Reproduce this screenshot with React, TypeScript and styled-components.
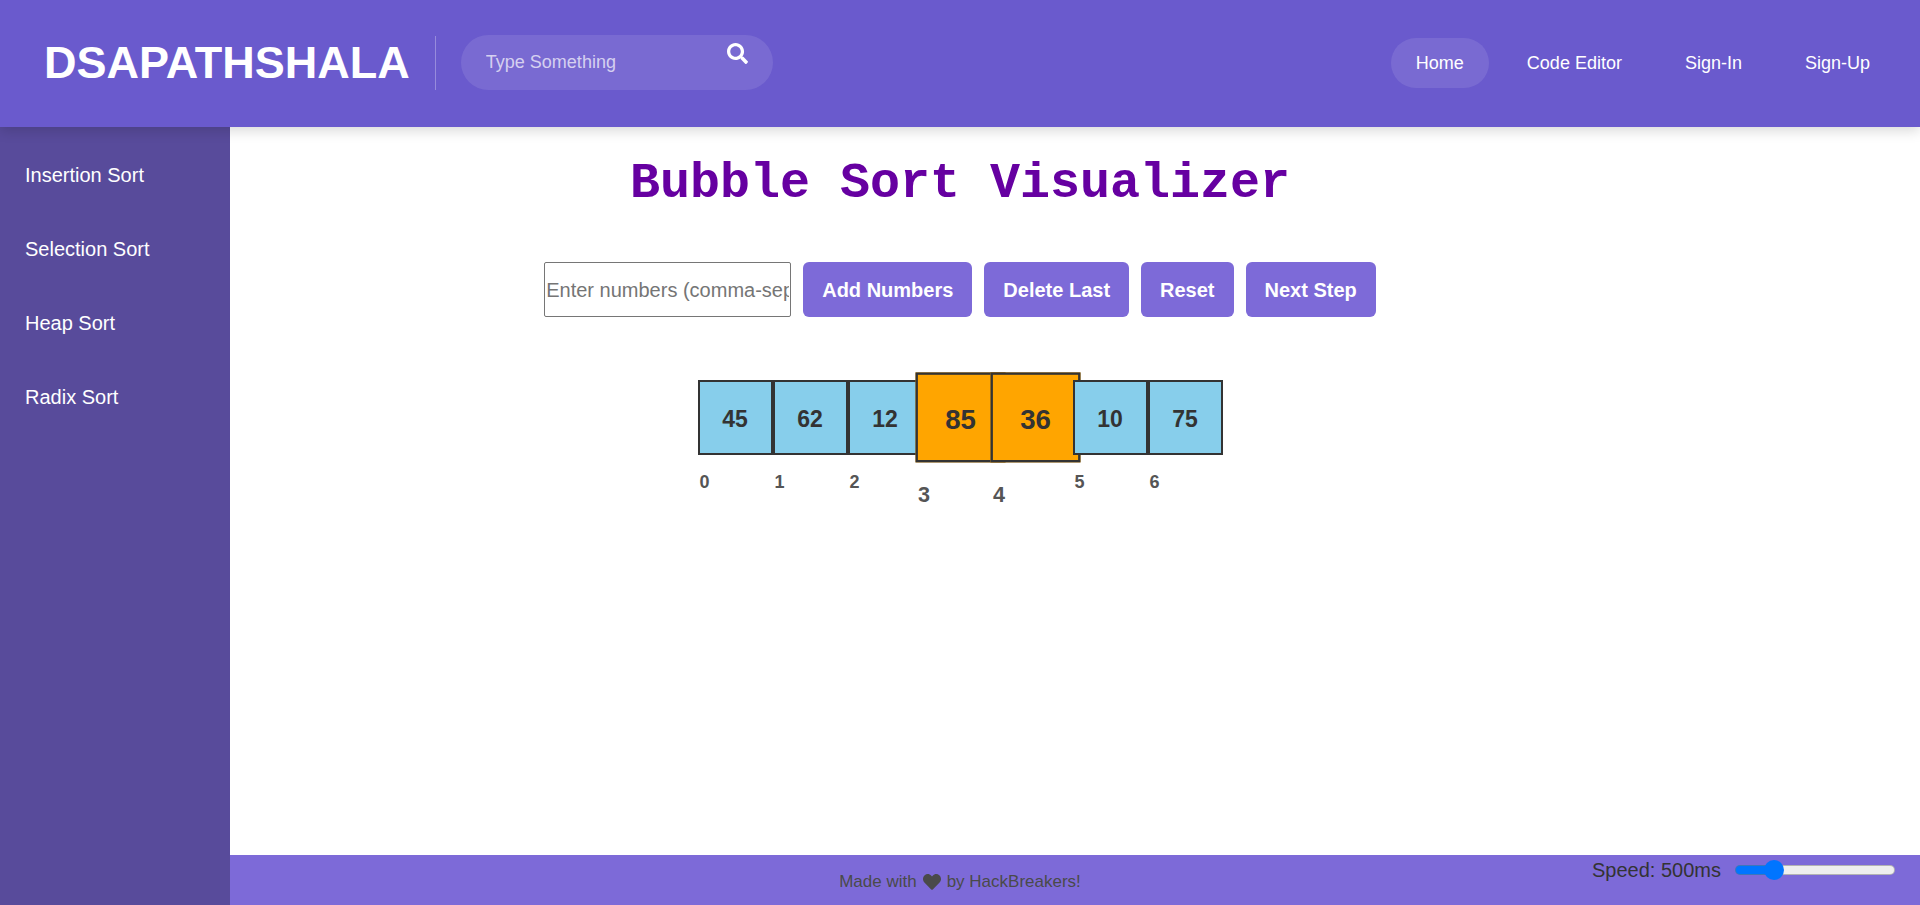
import React, { useState } from 'react';
import styled, { createGlobalStyle } from 'styled-components';
import { FaHeart, FaSearch } from 'react-icons/fa';

const GlobalStyle = createGlobalStyle`
  *, *::before, *::after { box-sizing: border-box; }
  body {
    margin: 0;
    background: #fff;
    color: #333;
    font-family: Arial, "Liberation Sans", sans-serif;
    font-size: 20px;
    line-height: 24px;
  }
  a { text-decoration: none; }
  ul, ol { margin: 0; padding: 0; list-style: none; }
`;

const Page = styled.div`
  display: grid;
  grid-template-rows: auto 1fr 50px;
  grid-template-columns: 230px 1fr;
  min-height: 100vh;
`;

const Header = styled.header`
  grid-area: 1 / 1 / 2 / -1;
  z-index: 2;
  display: flex;
  align-items: center;
  justify-content: space-between;
  padding: 35px 25px 37px 44px;
  background: #6a5acd;
  box-shadow: 0 4px 12px rgba(0, 0, 0, 0.15);
`;

const Brand = styled.div`
  display: flex;
  align-items: center;
  gap: 25px;
`;

const Logo = styled.a`
  color: #fff;
  font-size: 45px;
  font-weight: 700;
  line-height: 54px;
`;

const Divider = styled.span`
  width: 1px;
  height: 54px;
  background: rgba(255, 255, 255, 0.3);
`;

const Search = styled.form`
  display: flex;
  width: 312px;
  height: 55px;
  padding: 0 25px;
  border-radius: 28px;
  background: rgba(255, 255, 255, 0.1);
`;

const SearchInput = styled.input`
  flex: 1;
  min-width: 0;
  padding: 0;
  border: 0;
  outline: 0;
  background: none;
  color: #fff;
  font-family: inherit;
  font-size: 18px;
  &::placeholder { color: rgba(255, 255, 255, 0.7); }
`;

const SearchButton = styled.button`
  align-self: flex-start;
  display: flex;
  margin-top: 8px;
  padding: 0;
  border: 0;
  background: none;
  color: #fff;
  font-size: 21px;
  cursor: pointer;
`;

const Nav = styled.nav`
  display: flex;
  gap: 13px;
`;

const NavLink = styled.a<{ $active?: boolean }>`
  padding: 13px 25px;
  border-radius: 25px;
  background: ${({ $active }) => ($active ? 'rgba(255, 255, 255, 0.1)' : 'transparent')};
  color: #fff;
  font-size: 18px;
`;

const Sidebar = styled.aside`
  grid-area: 2 / 1 / 4 / 2;
  z-index: 1;
  padding-top: 11px;
  background: #584b9b;
`;

const SidebarLink = styled.a`
  display: block;
  padding: 25px;
  color: #fff;
`;

const Main = styled.main`
  grid-area: 2 / 1 / 3 / -1;
  display: flex;
  flex-direction: column;
  align-items: center;
  padding-top: 27px;
`;

const Title = styled.h1`
  margin: 0;
  color: #6600a1;
  font-family: "Courier New", "Liberation Mono", monospace;
  font-size: 50px;
  line-height: 60px;
`;

const Controls = styled.form`
  display: flex;
  gap: 12px;
  margin-top: 48px;
`;

const NumbersInput = styled.input`
  width: 247px;
  height: 55px;
  padding: 2px 1px 0;
  border: 1px solid #767676;
  border-radius: 2px;
  background: #fff;
  font-family: inherit;
  font-size: 20px;
  &::placeholder { color: #757575; }
`;

const ActionButton = styled.button`
  height: 55px;
  padding: 2px 19px 0;
  border: 0;
  border-radius: 6px;
  background: #7d6ad8;
  color: #fff;
  font-family: inherit;
  font-size: 20px;
  font-weight: 700;
  cursor: pointer;
`;

const ArrayRow = styled.ol`
  display: flex;
  margin-top: 63px;
`;

const ArrayItem = styled.li<{ $compared: boolean }>`
  position: relative;
  width: 75px;
  transform: ${({ $compared }) => ($compared ? 'scale(1.2)' : 'none')};
  transform-origin: 50% 38px;
`;

const ArrayBox = styled.div<{ $compared: boolean }>`
  display: grid;
  place-items: center;
  height: 75px;
  padding-top: 2px;
  border: 2px solid #333;
  background: ${({ $compared }) => ($compared ? '#ffa500' : '#87ceeb')};
  font-size: 23px;
  font-weight: 700;
`;

const ArrayIndex = styled.div`
  margin-top: 15px;
  padding-left: 2px;
  color: #555;
  font-size: 18px;
  font-weight: 700;
`;

const Footer = styled.footer`
  grid-area: 3 / 1 / 4 / -1;
  display: grid;
  grid-template-columns: 1fr auto 1fr;
  padding: 0 25px;
  background: #7d6ad8;
`;

const Credit = styled.p`
  grid-column: 2;
  align-self: center;
  display: flex;
  align-items: center;
  gap: 6px;
  margin: 0;
  padding-top: 3px;
  color: #4a4a4a;
  font-size: 17px;
  svg { font-size: 18px; }
`;

const Speed = styled.label`
  justify-self: end;
  align-self: start;
  display: flex;
  align-items: center;
  gap: 14px;
  padding-top: 3px;
`;

const Slider = styled.input`
  appearance: none;
  width: 160px;
  height: 10px;
  margin: 0;
  border: 1px solid rgba(120, 120, 120, 0.5);
  border-radius: 5px;
  background: linear-gradient(to right, #0075ff var(--fill), #efefef var(--fill)) border-box;
  &::-webkit-slider-thumb {
    appearance: none;
    width: 20px;
    height: 20px;
    border-radius: 50%;
    background: #0075ff;
  }
`;

const navItems = ['Home', 'Code Editor', 'Sign-In', 'Sign-Up'];
const sorts = ['Insertion Sort', 'Selection Sort', 'Heap Sort', 'Radix Sort'];
const actions = ['Add Numbers', 'Delete Last', 'Reset', 'Next Step'];
const values = [45, 62, 12, 85, 36, 10, 75];
const compared = [3, 4];

const MIN_SPEED = 100;
const MAX_SPEED = 2100;

export default function App() {
  const [speed, setSpeed] = useState(500);
  const fill = `${((speed - MIN_SPEED) / (MAX_SPEED - MIN_SPEED)) * 100}%`;

  return (
    <>
      <GlobalStyle />
      <Page>
        <Header>
          <Brand>
            <Logo href="#">DSAPATHSHALA</Logo>
            <Divider />
            <Search onSubmit={(e) => e.preventDefault()}>
              <SearchInput type="text" placeholder="Type Something" aria-label="Search" />
              <SearchButton type="submit" aria-label="Search">
                <FaSearch />
              </SearchButton>
            </Search>
          </Brand>
          <Nav>
            {navItems.map((item, i) => (
              <NavLink key={item} href="#" $active={i === 0}>{item}</NavLink>
            ))}
          </Nav>
        </Header>

        <Sidebar>
          <ul>
            {sorts.map((sort) => (
              <li key={sort}><SidebarLink href="#">{sort}</SidebarLink></li>
            ))}
          </ul>
        </Sidebar>

        <Main>
          <Title>Bubble Sort Visualizer</Title>
          <Controls onSubmit={(e) => e.preventDefault()}>
            <NumbersInput
              type="text"
              placeholder="Enter numbers (comma-separated)"
              aria-label="Numbers"
            />
            {actions.map((action) => (
              <ActionButton key={action} type="button">{action}</ActionButton>
            ))}
          </Controls>
          <ArrayRow>
            {values.map((value, i) => (
              <ArrayItem key={i} $compared={compared.includes(i)}>
                <ArrayBox $compared={compared.includes(i)}>{value}</ArrayBox>
                <ArrayIndex>{i}</ArrayIndex>
              </ArrayItem>
            ))}
          </ArrayRow>
        </Main>

        <Footer>
          <Credit>
            Made with <FaHeart /> by HackBreakers!
          </Credit>
          <Speed>
            Speed: {speed}ms
            <Slider
              type="range"
              min={MIN_SPEED}
              max={MAX_SPEED}
              step={100}
              value={speed}
              onChange={(e) => setSpeed(Number(e.target.value))}
              style={{ '--fill': fill } as React.CSSProperties}
            />
          </Speed>
        </Footer>
      </Page>
    </>
  );
}
